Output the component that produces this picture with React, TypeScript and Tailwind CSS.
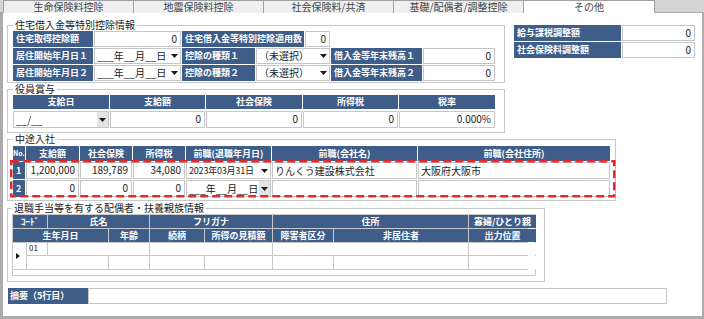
import React from 'react';

const Arrow = () => (
  <svg width="7" height="4" viewBox="0 0 7 4" className="block">
    <path d="M0 0h7L3.5 4z" fill="#1a1a1a" />
  </svg>
);

const Label = ({ w, children }: { w: string; children: React.ReactNode }) => (
  <div className={`${w} h-full bg-[#3e5d89] text-white font-bold text-[9px] leading-[16px] pl-[3px] whitespace-nowrap overflow-hidden`}>
    {children}
  </div>
);

const Value = ({ w, children }: { w: string; children?: React.ReactNode }) => (
  <div className={`${w} h-full bg-white border border-[#c6c6c6] text-right pr-[3px] text-[10px] leading-[14px] text-[#222]`}>
    {children}
  </div>
);

const Drop = ({ w, text, btn, small }: { w: string; text: string; btn?: boolean; small?: boolean }) => (
  <div className={`${w} h-full bg-white border border-[#c6c6c6] flex items-center text-[#222] ${small ? 'text-[9px] tracking-[-0.2px]' : 'text-[10px]'}`}>
    <span className="flex-1 pl-[2px] leading-[14px] whitespace-nowrap overflow-hidden">{text}</span>
    <span className={`w-[11px] h-full flex items-center justify-center ${btn ? 'bg-[#e4e4e4]' : ''}`}>
      <Arrow />
    </span>
  </div>
);

const Legend = ({ children }: { children: React.ReactNode }) => (
  <legend className="px-[2px] text-[10px] leading-[12px] text-[#222]">{children}</legend>
);

const tabs = ['生命保険料控除', '地震保険料控除', '社会保険料/共済', '基礎/配偶者/調整控除', 'その他'];

export default function App() {
  return (
    <div className="relative w-[704px] h-[319px] bg-white flex flex-col overflow-hidden font-['Noto_Sans_CJK_JP',sans-serif] text-[#222]">
      {/* tabs */}
      <div className="h-[13px] flex bg-[#d4d4d4] pl-[3px] border-b border-[#a8a8a8]">
        {tabs.map((t, i) => (
          <div
            key={t}
            className={`w-[130px] h-[13px] border-t border-l border-[#a0a0a0] flex items-center justify-center text-[10px] leading-none text-[#444] ${
              i === 4 ? 'bg-white border-r w-[132px]' : 'bg-[#efefef]'
            }`}
          >
            {t}
          </div>
        ))}
      </div>

      {/* panel */}
      <div className="flex-1 border-l-[3px] border-r-[2px] border-b-[3px] border-[#ababab] pl-[4px] pt-[6px] flex flex-col">
        {/* top row */}
        <div className="flex">
          <fieldset className="w-[498px] border border-[#c8c8c8] px-[5px] pb-[1px]">
            <Legend>住宅借入金等特別控除情報</Legend>
            <div className="flex flex-col gap-[1px]">
              <div className="h-[16px] flex gap-[1px]">
                <Label w="w-[80px]">住宅取得控除額</Label>
                <Value w="w-[87px]">0</Value>
                <Label w="w-[122px]">住宅借入金等特別控除適用数</Label>
                <Value w="w-[25px]">0</Value>
              </div>
              <div className="h-[16px] flex gap-[1px]">
                <Label w="w-[80px]">居住開始年月日１</Label>
                <Drop w="w-[87px]" text="___年__月__日" />
                <Label w="w-[73px]">控除の種類１</Label>
                <Drop w="w-[74px]" text="（未選択）" />
                <Label w="w-[91px]">借入金等年末残高１</Label>
                <Value w="w-[72px]">0</Value>
              </div>
              <div className="h-[16px] flex gap-[1px]">
                <Label w="w-[80px]">居住開始年月日２</Label>
                <Drop w="w-[87px]" text="___年__月__日" />
                <Label w="w-[73px]">控除の種類２</Label>
                <Drop w="w-[74px]" text="（未選択）" />
                <Label w="w-[91px]">借入金等年末残高２</Label>
                <Value w="w-[72px]">0</Value>
              </div>
            </div>
          </fieldset>
          <div className="ml-[9px] mt-[6px] flex flex-col gap-[1px]">
            <div className="h-[16px] flex gap-[1px]">
              <Label w="w-[107px]">給与課税調整額</Label>
              <Value w="w-[73px]">0</Value>
            </div>
            <div className="h-[16px] flex gap-[1px]">
              <Label w="w-[107px]">社会保険料調整額</Label>
              <Value w="w-[73px]">0</Value>
            </div>
          </div>
        </div>

        {/* 役員賞与 */}
        <fieldset className="w-[498px] border border-[#c8c8c8] px-[5px] pb-[4px]">
          <Legend>役員賞与</Legend>
          <div className="grid grid-cols-[96px_95px_96px_95px_96px] gap-[1px]">
            {['支給日', '支給額', '社会保険', '所得税', '税率'].map((h) => (
              <div key={h} className="h-[14px] bg-[#3e5d89] text-white font-bold text-[9px] leading-[14px] text-center">
                {h}
              </div>
            ))}
            <div className="h-[17px] mt-[1px]">
              <Drop w="w-full" text="__/__" btn />
            </div>
            <div className="h-[17px] mt-[1px]"><Value w="w-full">0</Value></div>
            <div className="h-[17px] mt-[1px]"><Value w="w-full">0</Value></div>
            <div className="h-[17px] mt-[1px]"><Value w="w-full">0</Value></div>
            <div className="h-[17px] mt-[1px]"><Value w="w-full">0.000%</Value></div>
          </div>
        </fieldset>

        {/* 中途入社 */}
        <fieldset className="w-[608px] border border-[#c8c8c8] px-[5px] pt-[1px] pb-[3px]">
          <Legend>中途入社</Legend>
          <div className="grid grid-cols-[12px_53px_52px_52px_85px_145px_192px] gap-x-[1px] gap-y-[1px]">
            {['No.', '支給額', '社会保険', '所得税', '前職(退職年月日)', '前職(会社名)', '前職(会社住所)'].map((h, i) => (
              <div
                key={h}
                className={`h-[15px] bg-[#3e5d89] text-white font-bold leading-[15px] text-center whitespace-nowrap overflow-hidden ${
                  i === 0 ? 'text-[7px]' : 'text-[9px]'
                }`}
              >
                {h}
              </div>
            ))}
            {/* row 1 */}
            <div className="h-[17px] bg-[#3e5d89] text-white font-bold text-[9px] leading-[17px] pl-[3px]">1</div>
            <div className="h-[17px]"><Value w="w-full">1,200,000</Value></div>
            <div className="h-[17px]"><Value w="w-full">189,789</Value></div>
            <div className="h-[17px]"><Value w="w-full">34,080</Value></div>
            <div className="h-[17px]"><Drop w="w-full" text="2023年03月31日" small /></div>
            <div className="h-[17px] bg-white border border-[#c6c6c6] text-[10px] leading-[15px] pl-[2px]">りんくう建設株式会社</div>
            <div className="h-[17px] bg-white border border-[#c6c6c6] text-[10px] leading-[15px] pl-[2px]">大阪府大阪市</div>
            {/* row 2 */}
            <div className="h-[17px] bg-[#3e5d89] text-white font-bold text-[9px] leading-[17px] pl-[3px]">2</div>
            <div className="h-[17px]"><Value w="w-full">0</Value></div>
            <div className="h-[17px]"><Value w="w-full">0</Value></div>
            <div className="h-[17px]"><Value w="w-full">0</Value></div>
            <div className="h-[17px]"><Drop w="w-full" text="___年__月__日" btn /></div>
            <div className="h-[17px] bg-white border border-[#c6c6c6]"></div>
            <div className="h-[17px] bg-white border border-[#c6c6c6]"></div>
          </div>
        </fieldset>

        {/* 退職手当 */}
        <fieldset className="mt-[1px] w-[538px] border border-[#c8c8c8] pl-[4px] pb-[5px]">
          <Legend>退職手当等を有する配偶者・扶養親族情報</Legend>
          <div className="w-[524px] h-[62px] border border-[#c8c8c8]">
            <div className="w-[515px] grid grid-cols-[13px_20px_60px_40px_54px_67px_60px_134px_67px] grid-rows-[13px_13px_12px_13px] gap-[1px] bg-[#c8c8c8] border-b border-[#c8c8c8]">
              {/* header row 1 */}
              <div className="col-span-2 bg-[#3e5d89] text-white font-bold text-[9px] leading-[13px] text-center">ｺｰﾄﾞ</div>
              <div className="col-span-2 bg-[#3e5d89] text-white font-bold text-[9px] leading-[13px] text-center">氏名</div>
              <div className="col-span-2 bg-[#3e5d89] text-white font-bold text-[9px] leading-[13px] text-center">フリガナ</div>
              <div className="col-span-2 bg-[#3e5d89] text-white font-bold text-[9px] leading-[13px] text-center">住所</div>
              <div className="bg-[#3e5d89] text-white font-bold text-[9px] leading-[13px] text-center whitespace-nowrap">寡婦/ひとり親</div>
              {/* header row 2 */}
              <div className="col-span-3 bg-[#3e5d89] text-white font-bold text-[9px] leading-[13px] text-center">生年月日</div>
              <div className="bg-[#3e5d89] text-white font-bold text-[9px] leading-[13px] text-center">年齢</div>
              <div className="bg-[#3e5d89] text-white font-bold text-[9px] leading-[13px] text-center">続柄</div>
              <div className="bg-[#3e5d89] text-white font-bold text-[9px] leading-[13px] text-center whitespace-nowrap">所得の見積額</div>
              <div className="bg-[#3e5d89] text-white font-bold text-[9px] leading-[13px] text-center whitespace-nowrap">障害者区分</div>
              <div className="bg-[#3e5d89] text-white font-bold text-[9px] leading-[13px] text-center">非居住者</div>
              <div className="bg-[#3e5d89] text-white font-bold text-[9px] leading-[13px] text-center">出力位置</div>
              {/* data row 1 */}
              <div className="row-span-2 bg-white flex items-center pl-[3px]">
                <svg width="4" height="6" viewBox="0 0 4 6"><path d="M0 0l4 3-4 3z" fill="#1a1a1a" /></svg>
              </div>
              <div className="bg-white text-[8px] leading-[9px] pl-[2px]">01</div>
              <div className="col-span-2 bg-white"></div>
              <div className="col-span-2 bg-white"></div>
              <div className="col-span-2 bg-white"></div>
              <div className="bg-white"></div>
              {/* data row 2 */}
              <div className="col-span-2 bg-white"></div>
              <div className="bg-white"></div>
              <div className="bg-white"></div>
              <div className="bg-white"></div>
              <div className="bg-white"></div>
              <div className="bg-white"></div>
              <div className="bg-white"></div>
            </div>
          </div>
        </fieldset>

        {/* 摘要 */}
        <div className="mt-[6px] ml-[1px] h-[16px] flex">
          <div className="w-[80px] h-full bg-[#3e5d89] text-white font-bold text-[9px] leading-[16px] pl-[2px] whitespace-nowrap">摘要（5行目）</div>
          <div className="w-[579px] h-full bg-white border border-[#c6c6c6]"></div>
        </div>
      </div>

      {/* red highlight */}
      <svg className="absolute left-[10px] top-[160px] pointer-events-none" width="606" height="38" viewBox="0 0 606 38">
        <rect x="1.25" y="1.25" width="603" height="35" fill="none" stroke="#e22a2a" strokeWidth="2.5" strokeDasharray="8 4" />
      </svg>
    </div>
  );
}
